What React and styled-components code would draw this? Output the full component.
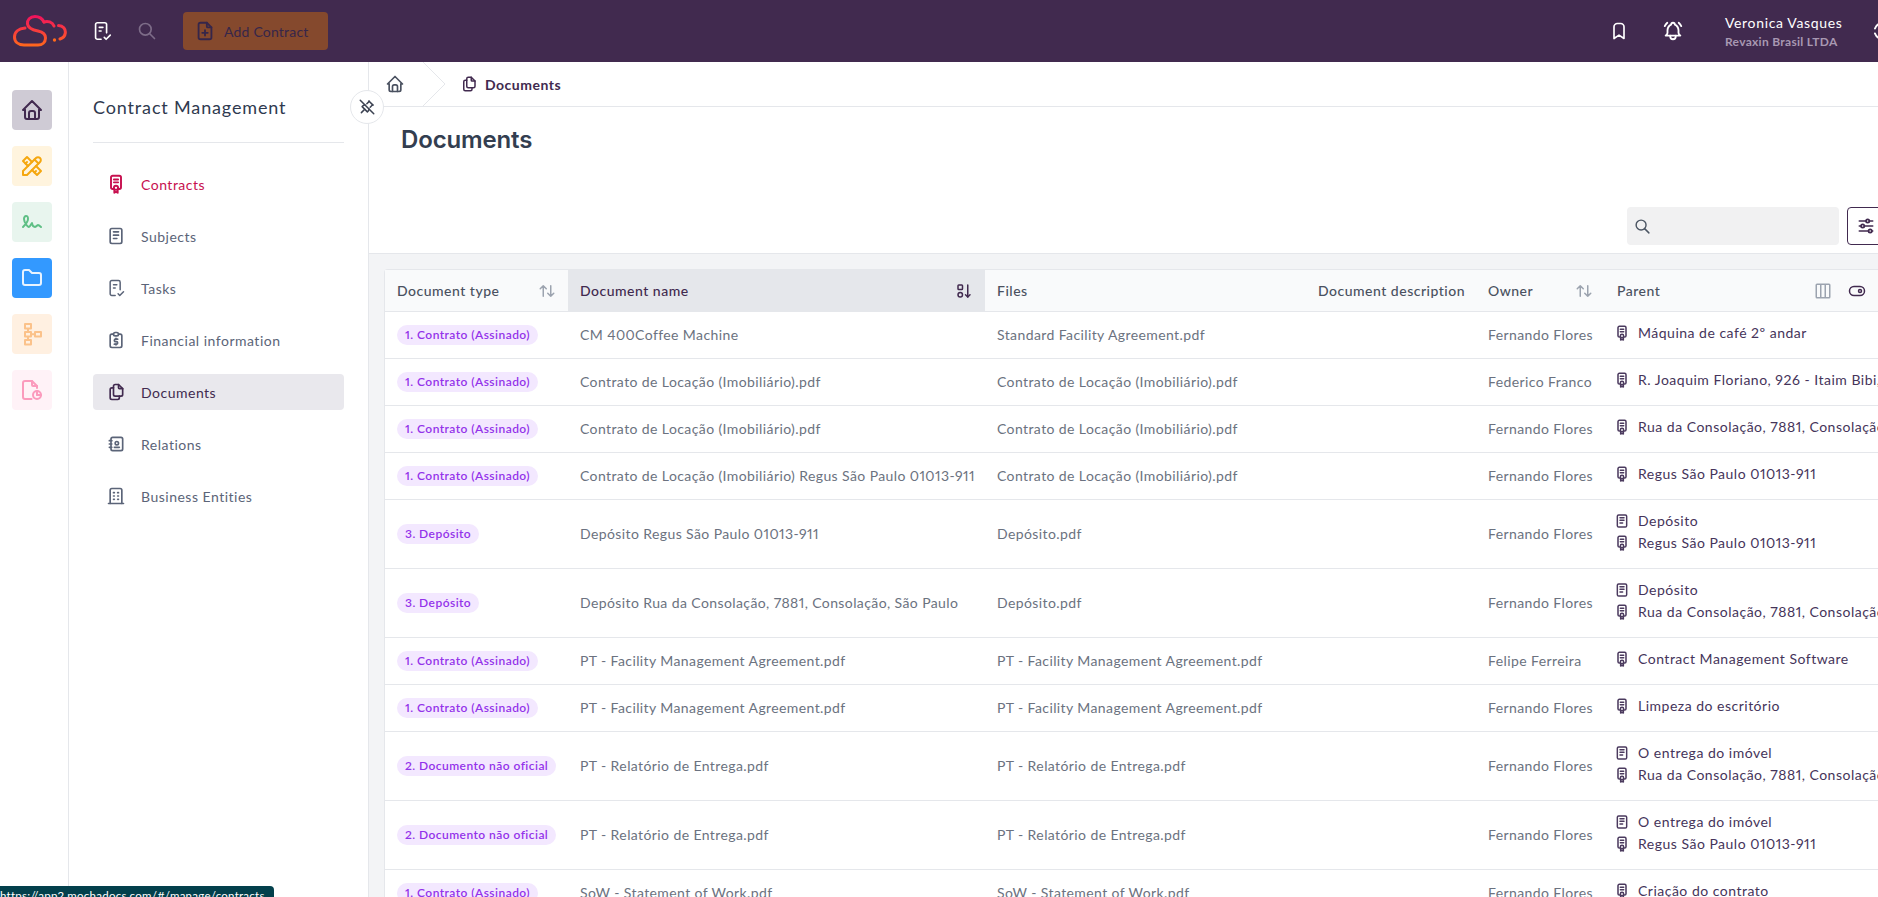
import React from 'react';
import styled, { createGlobalStyle } from 'styled-components';
import {
  TbHome,
  TbTools,
  TbSignature,
  TbFolder,
  TbFileReport,
  TbSearch,
  TbFilePlus,
  TbBookmark,
  TbBellRinging,
  TbNotes,
  TbReportMoney,
  TbFiles,
  TbAddressBook,
  TbBuilding,
  TbPinnedOff,
  TbArrowsSort,
  TbColumns3,
  TbToggleRight,
  TbAdjustmentsHorizontal,
} from 'react-icons/tb';

const font = '"Lato", "Noto Sans", sans-serif';

const GlobalStyle = createGlobalStyle`
  * { box-sizing: border-box; }
  html, body { margin: 0; padding: 0; height: 100%; overflow: hidden; background: #fff; }
  body { font-family: ${font}; font-variant-numeric: proportional-nums; }
`;

const ContractIcon = ({ size = 16 }) => (
  <svg width={size} height={size} viewBox="0 0 24 24" fill="none" stroke="currentColor" strokeWidth="2.3" strokeLinecap="round" strokeLinejoin="round">
    <path d="M9 18H8a2 2 0 0 1-2-2V4a2 2 0 0 1 2-2h8a2 2 0 0 1 2 2v12a2 2 0 0 1-2 2h-1" />
    <path d="M9.5 6.5h5" />
    <path d="M9.5 10h5" />
    <circle cx="12" cy="16.5" r="2.5" />
    <path d="M10 19v3.5l2-1 2 1V19" />
  </svg>
);

const TaskIcon = ({ size = 20 }) => (
  <svg width={size} height={size} viewBox="0 0 24 24" fill="none" stroke="currentColor" strokeWidth="1.8" strokeLinecap="round" strokeLinejoin="round">
    <path d="M11 21H7a2 2 0 0 1-2-2V5a2 2 0 0 1 2-2h8a2 2 0 0 1 2 2v9" />
    <path d="M9 8h4" />
    <path d="M9 12h2" />
    <path d="M14.5 19l2 2 4.5-4.5" />
  </svg>
);

const HierarchyIcon = ({ size = 24 }) => (
  <svg width={size} height={size} viewBox="0 0 24 24" fill="none" stroke="currentColor" strokeWidth="2" strokeLinejoin="round">
    <rect x="5" y="2" width="6" height="4.5" />
    <rect x="5" y="10" width="6" height="4.5" />
    <rect x="5" y="18" width="6" height="4.5" />
    <rect x="15" y="10" width="6" height="4.5" />
    <path d="M8 6.5V10M8 14.5V18M11 12.2h4" />
  </svg>
);

const SortActiveIcon = ({ size = 18 }) => (
  <svg width={size} height={size} viewBox="0 0 24 24" fill="none" stroke="currentColor" strokeWidth="2" strokeLinecap="round" strokeLinejoin="round">
    <rect x="4" y="4" width="6" height="6" rx="1" />
    <circle cx="7" cy="17" r="3" />
    <path d="M17 4v16" />
    <path d="M14 17l3 3 3-3" />
  </svg>
);

const MenuArcIcon = ({ size = 24 }) => (
  <svg width={size} height={size} viewBox="0 0 24 24" fill="none" stroke="currentColor" strokeWidth="2" strokeLinecap="round">
    <path d="M9 4.5A8.5 8.5 0 0 0 4 9.5" />
    <path d="M4 14.5A8.5 8.5 0 0 0 9 19.5" />
  </svg>
);

const Logo = () => (
  <svg width="54" height="32" viewBox="13 14 54 32" fill="none" strokeWidth="3" strokeLinecap="round">
    <defs>
      <linearGradient id="logoGrad" x1="0" y1="14" x2="0" y2="46" gradientUnits="userSpaceOnUse">
        <stop offset="0" stopColor="#f0105f" />
        <stop offset="1" stopColor="#ff6a1a" />
      </linearGradient>
    </defs>
    <g stroke="url(#logoGrad)">
      <path d="M44 21 C42 17 38 15.5 35 15.5 C30 15.5 27 19 27.5 23 C28 27.5 33 29 38 30 C43 31 45.5 33.5 45.5 37 C45.5 41.5 42 44 38 44 L24 44 C18 44 14.5 40.5 14.5 36 C14.5 31 18.5 27.5 25 27" />
      <path d="M44 21 C47.5 19.5 52.5 21 54 25" />
      <path d="M58.5 24.5 C63 24.5 65.8 28 65.3 32 C65 35 63 37 60 38" />
    </g>
    <circle cx="54.5" cy="39" r="1.7" fill="#ff6a1a" />
  </svg>
);

const Page = styled.div`
  width: 100%;
  height: 100vh;
  display: flex;
  flex-direction: column;
  overflow: hidden;
  position: relative;
  letter-spacing: 0.4px;
`;

const TopBar = styled.header`
  height: 62px;
  flex-shrink: 0;
  background: #412a4f;
  display: flex;
  align-items: center;
  padding-left: 13px;
`;

const TopIcon = styled.span`
  display: flex;
  color: ${(p) => p.$color || '#fff'};
  margin-left: ${(p) => p.$left || 0}px;
  flex-shrink: 0;
`;

const AddButton = styled.button`
  width: 145px;
  height: 38px;
  margin-left: 26px;
  border: 0;
  border-radius: 4px;
  background: #85492d;
  color: #36264a;
  font: 400 14px ${font};
  letter-spacing: 0.2px;
  display: flex;
  align-items: center;
  gap: 8px;
  padding: 0 0 0 11px;
`;

const TopRight = styled.div`
  margin-left: auto;
  display: flex;
  align-items: center;
  flex-shrink: 0;
  margin-right: -17px;
`;

const UserBlock = styled.div`
  width: 146px;
  margin-left: 41px;
  display: flex;
  flex-direction: column;
  gap: 3px;
`;

const UserName = styled.span`
  color: #fff;
  font-size: 14px;
  line-height: 17px;
  letter-spacing: 0.65px;
`;

const UserOrg = styled.span`
  color: #a898b2;
  font-size: 12px;
  line-height: 15px;
  font-weight: 700;
  letter-spacing: 0.3px;
`;

const Body = styled.div`
  flex: 1;
  min-height: 0;
  display: flex;
`;

const Rail = styled.nav`
  width: 69px;
  flex-shrink: 0;
  border-right: 1px solid #e5e7eb;
  padding: 28px 0 0 12px;
  display: flex;
  flex-direction: column;
  gap: 16px;
`;

const Tile = styled.span`
  width: 40px;
  height: 40px;
  border-radius: 4px;
  background: ${(p) => p.$bg};
  color: ${(p) => p.$fg};
  display: flex;
  align-items: center;
  justify-content: center;
`;

const SidePanel = styled.aside`
  width: 300px;
  flex-shrink: 0;
  border-right: 1px solid #e5e7eb;
  padding: 0 24px;
`;

const PanelTitle = styled.h2`
  margin: 0;
  height: 81px;
  padding-top: 34px;
  border-bottom: 1px solid #e5e7eb;
  font-size: 18px;
  line-height: 22px;
  font-weight: 400;
  color: #2f3a4f;
  letter-spacing: 0.85px;
`;

const Menu = styled.ul`
  list-style: none;
  margin: 23px 0 0;
  padding: 0;
  display: flex;
  flex-direction: column;
  gap: 16px;
`;

const MenuItem = styled.li`
  height: 36px;
  display: flex;
  align-items: center;
  gap: 15px;
  padding-left: 13px;
  border-radius: 4px;
  font-size: 14px;
  letter-spacing: 0.5px;
  background: ${(p) => (p.$active ? '#e9e8ed' : 'transparent')};
  color: ${(p) => (p.$danger ? '#c7104f' : p.$active ? '#412a4f' : '#5b6478')};
  svg { flex-shrink: 0; }
`;

const Main = styled.main`
  flex: 1;
  min-width: 0;
  display: flex;
  flex-direction: column;
  position: relative;
`;

const PinButton = styled.button`
  position: absolute;
  left: -19px;
  top: 28px;
  width: 34px;
  height: 34px;
  border-radius: 50%;
  background: #fff;
  border: 1px solid #e5e7eb;
  color: #3c4252;
  padding: 0;
  display: flex;
  align-items: center;
  justify-content: center;
  z-index: 2;
`;

const Breadcrumbs = styled.div`
  height: 45px;
  flex-shrink: 0;
  border-bottom: 1px solid #e5e7eb;
  display: flex;
  align-items: center;
  padding-left: 16px;
  color: #4a5160;
`;

const CrumbHome = styled.span`
  display: flex;
  width: 20px;
  margin-bottom: 1px;
`;

const CrumbChevron = styled.svg`
  width: 24px;
  height: 44px;
  margin-left: 17px;
  flex-shrink: 0;
`;

const CrumbCurrent = styled.span`
  display: flex;
  align-items: center;
  gap: 7px;
  margin-left: 14px;
  color: #412a4f;
  font-size: 14px;
  font-weight: 700;
  letter-spacing: 0.5px;
`;

const TitleBlock = styled.section`
  height: 147px;
  flex-shrink: 0;
  border-bottom: 1px solid #e5e7eb;
  padding: 18px 0 8px 32px;
  display: flex;
  flex-direction: column;
`;

const PageTitle = styled.h1`
  margin: 0;
  font: 600 24px/29px Inter, sans-serif;
  color: #333e50;
  letter-spacing: -0.15px;
`;

const Toolbar = styled.div`
  margin-top: auto;
  margin-right: -7px;
  display: flex;
  justify-content: flex-end;
  gap: 8px;
`;

const SearchBox = styled.div`
  width: 212px;
  height: 38px;
  border-radius: 4px;
  background: #f1f1f2;
  color: #4b5563;
  display: flex;
  align-items: center;
  padding-left: 7px;
`;

const FilterButton = styled.button`
  width: 38px;
  height: 38px;
  border: 1px solid #412a4f;
  border-radius: 4px;
  background: #fff;
  color: #412a4f;
  padding: 0;
  display: flex;
  align-items: center;
  justify-content: center;
`;

const TableArea = styled.div`
  flex: 1;
  min-height: 0;
  background: #f3f4f6;
  padding: 15px 0 0 15px;
  overflow: hidden;
`;

const TableCard = styled.div`
  background: #fff;
  border: 1px solid #e5e7eb;
  border-right: 0;
  border-radius: 4px 0 0 0;
`;

const Table = styled.table`
  width: 1493px;
  table-layout: fixed;
  border-collapse: separate;
  border-spacing: 0;
`;

const Th = styled.th`
  height: 42px;
  padding: 0 12px;
  text-align: left;
  font-size: 14px;
  font-weight: 500;
  letter-spacing: 0.5px;
  color: ${(p) => (p.$active ? '#412a4f' : '#4a5160')};
  background: ${(p) => (p.$active ? '#e5e7eb' : '#f9fafb')};
  border-bottom: 1px solid #e5e7eb;
  white-space: nowrap;
`;

const ThInner = styled.div`
  display: flex;
  align-items: center;
  justify-content: space-between;
`;

const ThTools = styled.span`
  display: flex;
  align-items: center;
  gap: 16px;
  color: #412a4f;
`;

const SortIcon = styled.span`
  display: flex;
  color: ${(p) => (p.$active ? '#412a4f' : '#9ca3af')};
`;

const Td = styled.td`
  padding: 12px;
  font-size: 14px;
  line-height: 22px;
  height: 47px;
  color: #6b7280;
  border-bottom: 1px solid #e5e7eb;
  white-space: nowrap;
  vertical-align: middle;
`;

const Badge = styled.span`
  display: block;
  width: fit-content;
  height: 20px;
  line-height: 20px;
  margin: 1px 0;
  padding: 0 8px;
  border-radius: 10px;
  background: #f3e8ff;
  color: #9333ea;
  font-size: 12px;
  font-weight: 600;
  letter-spacing: 0.45px;
`;

const ParentLine = styled.div`
  height: 22px;
  display: flex;
  align-items: center;
  gap: 8px;
  margin-left: -3px;
  color: #45345a;
  letter-spacing: 0.5px;
  position: relative;
  top: -2px;
  svg { flex-shrink: 0; color: #4b3a5e; }
`;

const StatusTip = styled.div`
  position: absolute;
  left: 0;
  bottom: -9px;
  width: 274px;
  height: 20px;
  background: #03404c;
  border-radius: 0 4px 0 0;
  color: #fff;
  font-size: 11.5px;
  line-height: 20px;
  letter-spacing: 0.25px;
  white-space: nowrap;
  overflow: hidden;
  z-index: 5;
`;

const menu = [
  { label: 'Contracts', icon: <ContractIcon size={20} />, danger: true },
  { label: 'Subjects', icon: <TbNotes size={20} /> },
  { label: 'Tasks', icon: <TaskIcon /> },
  { label: 'Financial information', icon: <TbReportMoney size={20} /> },
  { label: 'Documents', icon: <TbFiles size={20} />, active: true },
  { label: 'Relations', icon: <TbAddressBook size={20} /> },
  { label: 'Business Entities', icon: <TbBuilding size={20} /> },
];

const SIGNED = '1. Contrato (Assinado)';
const LEASE = 'Contrato de Locação (Imobiliário).pdf';
const CONSOLACAO = 'Rua da Consolação, 7881, Consolação, São Paulo';
const REGUS = 'Regus São Paulo 01013-911';
const FACILITY = 'PT - Facility Management Agreement.pdf';
const DELIVERY = 'PT - Relatório de Entrega.pdf';
const FF = 'Fernando Flores';

const rows = [
  [SIGNED, 'CM 400Coffee Machine', 'Standard Facility Agreement.pdf', FF, [['c', 'Máquina de café 2º andar']]],
  [SIGNED, LEASE, LEASE, 'Federico Franco', [['c', 'R. Joaquim Floriano, 926 - Itaim Bibi, São Paulo']]],
  [SIGNED, LEASE, LEASE, FF, [['c', CONSOLACAO]]],
  [SIGNED, 'Contrato de Locação (Imobiliário) Regus São Paulo 01013-911', LEASE, FF, [['c', REGUS]]],
  ['3. Depósito', 'Depósito Regus São Paulo 01013-911', 'Depósito.pdf', FF, [['d', 'Depósito'], ['c', REGUS]]],
  ['3. Depósito', 'Depósito Rua da Consolação, 7881, Consolação, São Paulo', 'Depósito.pdf', FF, [['d', 'Depósito'], ['c', CONSOLACAO]]],
  [SIGNED, FACILITY, FACILITY, 'Felipe Ferreira', [['c', 'Contract Management Software']]],
  [SIGNED, FACILITY, FACILITY, FF, [['c', 'Limpeza do escritório']]],
  ['2. Documento não oficial', DELIVERY, DELIVERY, FF, [['d', 'O entrega do imóvel'], ['c', CONSOLACAO]]],
  ['2. Documento não oficial', DELIVERY, DELIVERY, FF, [['d', 'O entrega do imóvel'], ['c', REGUS]]],
  [SIGNED, 'SoW - Statement of Work.pdf', 'SoW - Statement of Work.pdf', FF, [['c', 'Criação do contrato']]],
];

const columns = [183, 417, 321, 170, 129, 273];

const App = () => {
  return (
    <Page>
      <GlobalStyle />
      <TopBar>
        <Logo />
        <TopIcon $left={24}><TaskIcon size={22} /></TopIcon>
        <TopIcon $left={24} $color="#7d6c88"><TbSearch size={20} /></TopIcon>
        <AddButton>
          <TbFilePlus size={22} />
          Add Contract
        </AddButton>
        <TopRight>
          <TopIcon><TbBookmark size={20} /></TopIcon>
          <TopIcon $left={33}><TbBellRinging size={22} /></TopIcon>
          <UserBlock>
            <UserName>Veronica Vasques</UserName>
            <UserOrg>Revaxin Brasil LTDA</UserOrg>
          </UserBlock>
          <TopIcon><MenuArcIcon /></TopIcon>
        </TopRight>
      </TopBar>

      <Body>
        <Rail>
          <Tile $bg="#cfcbd5" $fg="#412a4f"><TbHome size={24} /></Tile>
          <Tile $bg="#fff4de" $fg="#f5a70f"><TbTools size={24} /></Tile>
          <Tile $bg="#e8f5ee" $fg="#5fbf85"><TbSignature size={24} /></Tile>
          <Tile $bg="#3399ff" $fg="#e8f3ff"><TbFolder size={24} /></Tile>
          <Tile $bg="#fff0e1" $fg="#fbc28a"><HierarchyIcon /></Tile>
          <Tile $bg="#fff2f7" $fg="#fb9bbd"><TbFileReport size={24} /></Tile>
        </Rail>

        <SidePanel>
          <PanelTitle>Contract Management</PanelTitle>
          <Menu>
            {menu.map((item) => (
              <MenuItem key={item.label} $active={item.active} $danger={item.danger}>
                {item.icon}
                {item.label}
              </MenuItem>
            ))}
          </Menu>
        </SidePanel>

        <Main>
          <PinButton><TbPinnedOff size={18} /></PinButton>
          <Breadcrumbs>
            <CrumbHome><TbHome size={20} /></CrumbHome>
            <CrumbChevron viewBox="0 0 24 44" fill="none" stroke="#e5e7eb">
              <path d="M1 0l22 22L1 44" />
            </CrumbChevron>
            <CrumbCurrent>
              <TbFiles size={18} />
              Documents
            </CrumbCurrent>
          </Breadcrumbs>

          <TitleBlock>
            <PageTitle>Documents</PageTitle>
            <Toolbar>
              <SearchBox><TbSearch size={17} /></SearchBox>
              <FilterButton><TbAdjustmentsHorizontal size={20} /></FilterButton>
            </Toolbar>
          </TitleBlock>

          <TableArea>
            <TableCard>
              <Table>
                <colgroup>
                  {columns.map((w, i) => <col key={i} width={w} />)}
                </colgroup>
                <thead>
                  <tr>
                    <Th>
                      <ThInner>
                        Document type
                        <SortIcon><TbArrowsSort size={18} /></SortIcon>
                      </ThInner>
                    </Th>
                    <Th $active>
                      <ThInner>
                        Document name
                        <SortIcon $active><SortActiveIcon /></SortIcon>
                      </ThInner>
                    </Th>
                    <Th>Files</Th>
                    <Th>Document description</Th>
                    <Th>
                      <ThInner>
                        Owner
                        <SortIcon><TbArrowsSort size={18} /></SortIcon>
                      </ThInner>
                    </Th>
                    <Th>
                      <ThInner>
                        Parent
                        <ThTools>
                          <SortIcon><TbColumns3 size={18} /></SortIcon>
                          <TbToggleRight size={18} />
                        </ThTools>
                      </ThInner>
                    </Th>
                  </tr>
                </thead>
                <tbody>
                  {rows.map((row, i) => (
                    <tr key={i}>
                      <Td><Badge>{row[0]}</Badge></Td>
                      <Td>{row[1]}</Td>
                      <Td>{row[2]}</Td>
                      <Td />
                      <Td>{row[3]}</Td>
                      <Td>
                        {row[4].map(([kind, text]) => (
                          <ParentLine key={text}>
                            {kind === 'c' ? <ContractIcon /> : <TbNotes size={16} strokeWidth={2.2} />}
                            {text}
                          </ParentLine>
                        ))}
                      </Td>
                    </tr>
                  ))}
                </tbody>
              </Table>
            </TableCard>
          </TableArea>
        </Main>
      </Body>

      <StatusTip>https://app2.mochadocs.com/#/manage/contracts</StatusTip>
    </Page>
  );
};

export default App;
